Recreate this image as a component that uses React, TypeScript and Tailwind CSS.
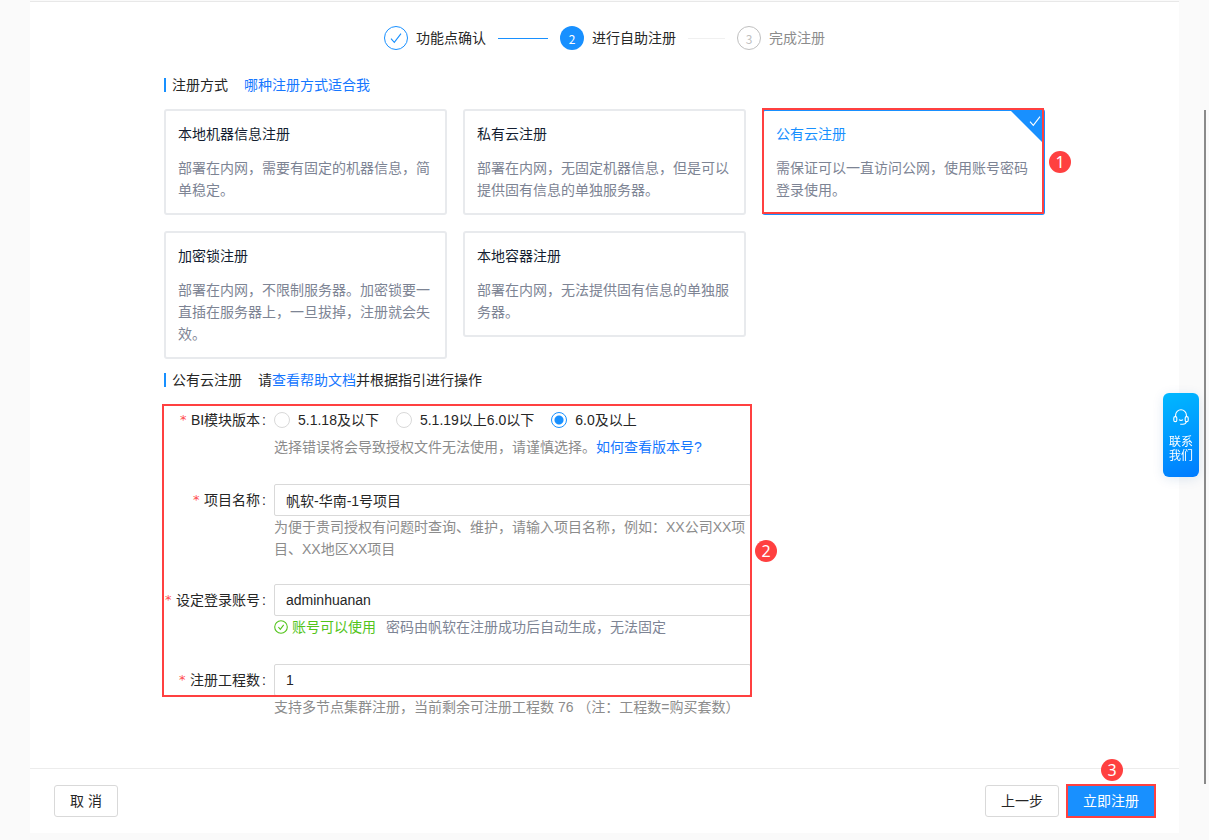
import { useState, type ReactNode } from "react";

const METHODS = [
  { id: "machine", title: "本地机器信息注册", text: "部署在内网，需要有固定的机器信息，简单稳定。" },
  { id: "private", title: "私有云注册", text: "部署在内网，无固定机器信息，但是可以提供固有信息的单独服务器。" },
  { id: "public", title: "公有云注册", text: "需保证可以一直访问公网，使用账号密码登录使用。" },
  { id: "dongle", title: "加密锁注册", text: "部署在内网，不限制服务器。加密锁要一直插在服务器上，一旦拔掉，注册就会失效。" },
  { id: "container", title: "本地容器注册", text: "部署在内网，无法提供固有信息的单独服务器。" },
];

const VERSIONS = ["5.1.18及以下", "5.1.19以上6.0以下", "6.0及以上"];

function Badge({ n, className }: { n: number; className: string }) {
  return (
    <span
      className={`absolute flex size-[22px] items-center justify-center rounded-full bg-[#ff4040] font-['Noto_Sans',sans-serif] text-base leading-none text-white ${className}`}
    >
      {n}
    </span>
  );
}

function Check({ className }: { className: string }) {
  return (
    <svg viewBox="0 0 12 12" fill="none" stroke="currentColor" className={className} aria-hidden="true">
      <path d="M1 6.6 4.3 10.3 11 1.6" strokeWidth="1.1" />
    </svg>
  );
}

function Steps() {
  return (
    <ol className="flex items-center justify-center gap-3 leading-6">
      <li className="flex items-center gap-2">
        <span className="flex size-6 items-center justify-center rounded-full border border-[#1890ff] text-[#1890ff]">
          <Check className="size-3" />
        </span>
        功能点确认
      </li>
      <li className="h-px w-[50px] bg-[#1890ff]" aria-hidden="true" />
      <li className="flex items-center gap-2" aria-current="step">
        <span className="flex size-6 items-center justify-center rounded-full bg-[#1890ff] pt-0.5 font-['Noto_Sans_CJK_SC',sans-serif] text-xs leading-none text-white">
          2
        </span>
        进行自助注册
      </li>
      <li className="h-px w-[37px] bg-[#f0f0f0]" aria-hidden="true" />
      <li className="flex items-center gap-2 text-[#8c8c8c]">
        <span className="flex size-6 items-center justify-center rounded-full border border-[#bfbfbf] pt-0.5 font-['Noto_Sans_CJK_SC',sans-serif] text-xs leading-none text-[#bfbfbf]">
          3
        </span>
        完成注册
      </li>
    </ol>
  );
}

function Heading({ title, children }: { title: string; children: ReactNode }) {
  return (
    <div className="flex items-center leading-[22px]">
      <span className="mr-1.5 h-3.5 w-0.5 bg-[#1890ff]" />
      <h2 className="mr-4">{title}</h2>
      <p>{children}</p>
    </div>
  );
}

function Field({
  label,
  htmlFor,
  help,
  children,
}: {
  label: string;
  htmlFor?: string;
  help: ReactNode;
  children: ReactNode;
}) {
  return (
    <div className="flex">
      <div className="flex h-8 w-[110px] shrink-0 items-center justify-end pr-2">
        <span className="mr-1 h-4 w-[7px] font-['DejaVu_Sans',sans-serif] text-[13px] leading-4 text-[#ff4d4f]" aria-hidden="true">
          *
        </span>
        <label htmlFor={htmlFor} className="whitespace-nowrap">
          {label}
        </label>
        <span className="ml-0.5">:</span>
      </div>
      <div className="min-w-0 flex-1">
        <div className="flex h-8 items-center">{children}</div>
        <div className="min-h-6 leading-[22px] text-[#8c8c8c]">{help}</div>
      </div>
    </div>
  );
}

const INPUT = "h-8 w-full rounded-[2px] border border-[#d9d9d9] bg-white px-[11px] outline-none focus:border-[#1890ff]";

export default function App() {
  const [method, setMethod] = useState("public");
  const [version, setVersion] = useState(2);

  return (
    <div className="relative min-h-screen bg-[#fafafa] px-[30px] pt-px font-['Liberation_Sans','Noto_Sans_CJK_SC',sans-serif] text-sm text-[#262626]">
      <main className="border-t border-[#e8e8e8] bg-white">
        <div className="pt-6 pb-12">
          <Steps />

          <div className="mx-auto mt-6 max-w-[881px]">
            <Heading title="注册方式">
              <a href="#methods" className="text-[#1677ff]">
                哪种注册方式适合我
              </a>
            </Heading>

            <div id="methods" className="mt-[13px] grid grid-cols-3 items-start gap-4">
              {METHODS.map((m) => {
                const active = m.id === method;
                return (
                  <div key={m.id} className="relative">
                    <button
                      type="button"
                      aria-pressed={active}
                      onClick={() => setMethod(m.id)}
                      className={`relative block w-full rounded-[3px] border-2 p-3 text-left leading-[22px] ${
                        active ? "border-[#1890ff]" : "border-[#e8eaed]"
                      }`}
                    >
                      <span className={`block ${active ? "text-[#1890ff]" : "text-[#141e31]"}`}>{m.title}</span>
                      <span className="mt-3 block text-[#7d8494]">{m.text}</span>
                      {active && (
                        <span className="absolute top-0 right-0 size-8 bg-[#1890ff] text-white [clip-path:polygon(0_0,100%_0,100%_100%)]">
                          <Check className="absolute top-1 right-0.5 size-3" />
                        </span>
                      )}
                    </button>
                    {m.id === "public" && (
                      <>
                        <span className="pointer-events-none absolute -top-px right-px bottom-px left-0 border-2 border-[#ff4040]" />
                        <Badge n={1} className="top-[42px] -right-[26px]" />
                      </>
                    )}
                  </div>
                );
              })}
            </div>

            <div className="mt-2.5">
              <Heading title="公有云注册">
                请
                <a href="#help" className="text-[#1677ff]">
                  查看帮助文档
                </a>
                并根据指引进行操作
              </Heading>
            </div>

            <form className="relative mt-[13px] flex max-w-[587px] flex-col gap-6" onSubmit={(e) => e.preventDefault()}>
              <Field
                label="BI模块版本"
                htmlFor="version-2"
                help={
                  <>
                    选择错误将会导致授权文件无法使用，请谨慎选择。
                    <a href="#version" className="text-[#1677ff]">
                      如何查看版本号?
                    </a>
                  </>
                }
              >
                <div className="flex gap-[17px]">
                  {VERSIONS.map((v, i) => (
                    <label key={v} htmlFor={`version-${i}`} className="flex items-center gap-2 whitespace-nowrap">
                      <input
                        id={`version-${i}`}
                        type="radio"
                        name="version"
                        checked={version === i}
                        onChange={() => setVersion(i)}
                        className="size-4 appearance-none rounded-full border border-[#d9d9d9] bg-white checked:border-[#1890ff] checked:bg-[radial-gradient(circle,#1890ff_4px,white_5px)]"
                      />
                      {v}
                    </label>
                  ))}
                </div>
              </Field>

              <Field
                label="项目名称"
                htmlFor="project"
                help="为便于贵司授权有问题时查询、维护，请输入项目名称，例如：XX公司XX项目、XX地区XX项目"
              >
                <input id="project" defaultValue="帆软-华南-1号项目" className={INPUT} />
              </Field>

              <Field
                label="设定登录账号"
                htmlFor="account"
                help={
                  <div className="flex items-center">
                    <svg viewBox="0 0 14 14" fill="none" stroke="#52c41a" className="mr-1 size-3.5" aria-hidden="true">
                      <circle cx="7" cy="7" r="6.3" strokeWidth="1.1" />
                      <path d="M4.4 7 6.3 9.4 9.7 4.9" strokeWidth="1.1" />
                    </svg>
                    <span className="mr-2.5 text-[#52c41a]">账号可以使用</span>
                    <span className="text-[#7d8494]">密码由帆软在注册成功后自动生成，无法固定</span>
                  </div>
                }
              >
                <input id="account" defaultValue="adminhuanan" className={INPUT} />
              </Field>

              <Field
                label="注册工程数"
                htmlFor="count"
                help="支持多节点集群注册，当前剩余可注册工程数 76 （注：工程数=购买套数）"
              >
                <input id="count" defaultValue="1" className={INPUT} />
              </Field>

              <span className="pointer-events-none absolute top-0 -right-px bottom-[23px] -left-0.5 border-2 border-[#ff4040]" />
              <Badge n={2} className="top-[136px] -right-[26px]" />
            </form>
          </div>
        </div>

        <footer className="flex items-center gap-2 border-t border-[#ececec] px-6 py-4">
          <button type="button" className="mr-auto h-8 rounded-[3px] border border-[#d9d9d9] bg-white px-[15px] whitespace-pre">
            取 消
          </button>
          <button type="button" className="h-8 rounded-[3px] border border-[#d9d9d9] bg-white px-[15px]">
            上一步
          </button>
          <div className="relative">
            <button type="button" className="block h-8 bg-[#1890ff] px-4 text-white">
              立即注册
            </button>
            <span className="pointer-events-none absolute -inset-px border-2 border-[#ff4040]" />
            <Badge n={3} className="-top-[26px] left-[34px]" />
          </div>
        </footer>
      </main>

      <button
        type="button"
        className="fixed top-[393px] right-[10px] flex w-9 flex-col items-center rounded-md bg-linear-160 from-[#00b8ff] to-[#007bff] px-1.5 pt-4 pb-3.5 text-xs leading-[14px] text-white shadow-[0_2px_12px_rgba(0,80,160,0.12)]"
      >
        <svg viewBox="0 0 16 16" fill="none" stroke="currentColor" strokeWidth="1.1" className="mb-2.5 size-4" aria-hidden="true">
          <path d="M2.6 8V6.2a5.4 5.4 0 0 1 10.8 0V8" />
          <rect x="0.8" y="7.6" width="3" height="5" rx="1.4" />
          <rect x="12.2" y="7.6" width="3" height="5" rx="1.4" />
          <path d="M6 10.6q2 1.6 4 0M13.4 12.6q-.6 2.6-3.4 2.6H7.2" />
        </svg>
        联系
        <br />
        我们
      </button>

      <div className="fixed top-[110px] right-[3px] h-[674px] w-0.5 bg-[#8a8a8a]" aria-hidden="true" />
    </div>
  );
}
